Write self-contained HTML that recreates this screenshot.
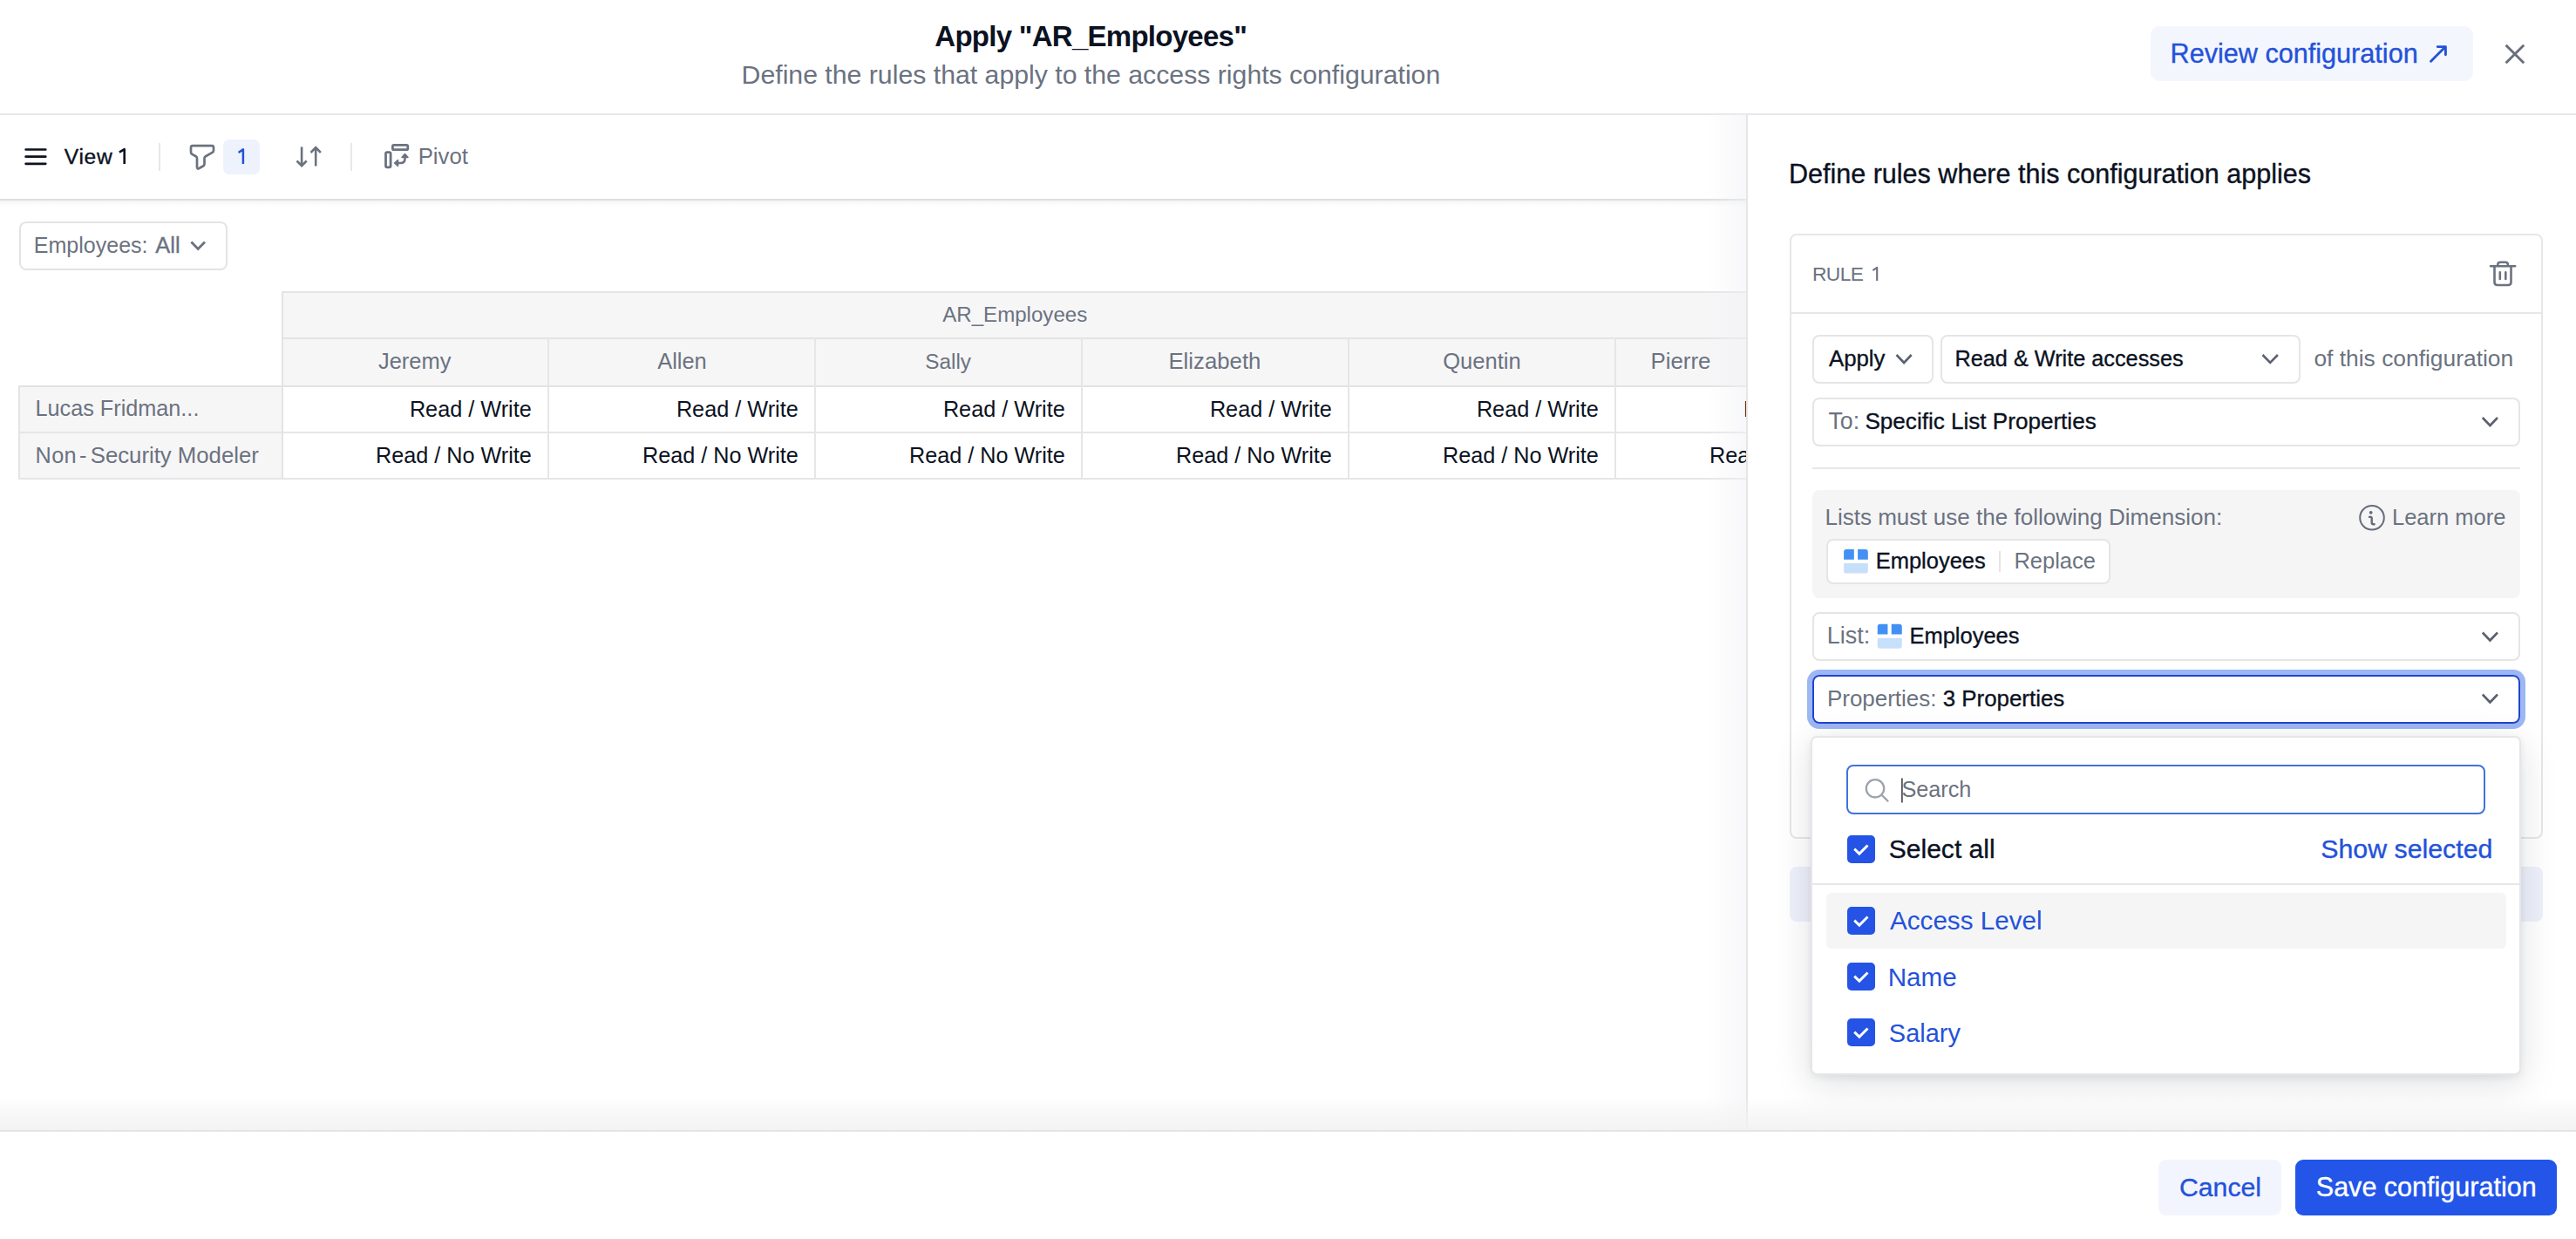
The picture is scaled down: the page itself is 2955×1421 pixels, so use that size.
<!DOCTYPE html>
<html><head><meta charset="utf-8">
<style>
html,body{margin:0;padding:0;width:2955px;height:1421px;overflow:hidden;background:#FFFFFF;}
body{position:relative;font-family:"Liberation Sans",sans-serif;}
.a{position:absolute;box-sizing:border-box;}
.t{position:absolute;line-height:1;white-space:pre;font-family:"Liberation Sans",sans-serif;-webkit-font-smoothing:antialiased;}
.lp{position:absolute;left:0;top:0;width:2004px;height:1297px;overflow:hidden;}
svg{position:absolute;overflow:visible;}
</style></head><body>
<!-- header -->
<div class="a" style="left:0;top:130px;width:2955px;height:2px;background:#E8E8EB"></div>
<div class="a" style="left:2467px;top:30px;width:370px;height:63px;border-radius:10px;background:#F4F6FE"></div>
<svg style="left:0;top:0" width="1" height="1">
  <path d="M2788.6 70.2 L2804.6 54.2 M2796.2 53.6 H2805.4 V62.8" fill="none" stroke="#2352DA" stroke-width="2.9" stroke-linecap="round" stroke-linejoin="round"/>
  <path d="M2874.6 51.8 L2895.2 72.2 M2895.2 51.8 L2874.6 72.2" fill="none" stroke="#676D7B" stroke-width="2.9"/>
</svg>

<!-- left panel -->
<div class="lp">
  <!-- toolbar -->
  <div class="a" style="left:0;top:228px;width:2004px;height:2px;background:#DDDEE1"></div>
  <div class="a" style="left:0;top:230px;width:2004px;height:7px;background:linear-gradient(#F5F5F7,rgba(255,255,255,0))"></div>
  <svg style="left:0;top:0" width="1" height="1">
    <path d="M29.6 171.5 H52.3 M29.6 179.7 H52.3 M29.6 187.8 H52.3" stroke="#0B1222" stroke-width="2.7" stroke-linecap="round"/>
    <path d="M221 167.2 H243 Q245 167.2 245 169.2 V172.5 Q245 174 243.6 174.8 L235.5 179.5 Q234.5 180.2 234.5 181.5 V188 Q234.5 189.5 233.3 190.3 L228.5 193 Q226 194.2 226 191.5 V181.5 Q226 180.2 225 179.5 L220.4 176.8 Q219 176 219 174.5 V169.2 Q219 167.2 221 167.2 Z" fill="none" stroke="#6B7280" stroke-width="2.7" stroke-linejoin="round"/>
    <path d="M346.1 168.5 V190 M340.5 184.5 L346.1 190.2 L351.7 184.5 M362.2 169 V190.5 M356.5 175 L362.2 169.2 L367.9 175" fill="none" stroke="#6B7280" stroke-width="2.6"/>
    <rect x="442.5" y="174.6" width="5.6" height="17.2" rx="1.5" fill="none" stroke="#6B7280" stroke-width="2.8"/>
    <rect x="450.4" y="166.3" width="17.4" height="5.4" rx="1.5" fill="none" stroke="#6B7280" stroke-width="2.8"/>
    <path d="M464.5 180 V182 Q464.5 187 459.5 187 H455" fill="none" stroke="#6B7280" stroke-width="2.6"/>
    <path d="M461 180.5 L464.5 176.5 L468 180.5 Z M456.5 183.5 L452.5 187 L456.5 190.5 Z" fill="#6B7280" stroke="#6B7280" stroke-width="1.5" stroke-linejoin="round"/>
  </svg>
  <svg style="left:0;top:0" width="1" height="1"><path d="M136.9 174.6 L142.7 171.1 V188.1" fill="none" stroke="#0B1222" stroke-width="2.6" stroke-linejoin="round"/></svg>
  <div class="a" style="left:182.3px;top:164px;width:1.5px;height:32px;background:#E5E7EB"></div>
  <div class="a" style="left:402.2px;top:164px;width:1.5px;height:32px;background:#E5E7EB"></div>
  <div class="a" style="left:256px;top:160px;width:42px;height:40px;border-radius:7px;background:#EEF2FD"></div>
  <svg style="left:0;top:0" width="1" height="1"><path d="M273.6 175 L278.9 171.4 V188" fill="none" stroke="#2352DA" stroke-width="2.5" stroke-linejoin="round"/></svg>

  <!-- employees all -->
  <div class="a" style="left:22px;top:254px;width:239px;height:56px;border:2px solid #E3E4E7;border-radius:8px"></div>
  <svg style="left:0;top:0" width="1" height="1">
    <path d="M219.4 277.6 L227.2 285.6 L235 277.6" fill="none" stroke="#6B7280" stroke-width="2.8"/>
  </svg>

  <!-- table -->
  <div class="a" style="left:323px;top:334px;width:1700px;height:108px;background:#F6F6F7"></div>
  <div class="a" style="left:21px;top:442px;width:302px;height:108px;background:#F6F6F7"></div>
  <div class="a" style="left:323px;top:334px;width:1700px;height:2px;background:#E4E4E6"></div>
  <div class="a" style="left:323px;top:387px;width:1700px;height:2px;background:#E4E4E6"></div>
  <div class="a" style="left:21px;top:442px;width:2000px;height:2px;background:#E2E2E5"></div>
  <div class="a" style="left:21px;top:495px;width:2000px;height:2px;background:#E6E6E8"></div>
  <div class="a" style="left:21px;top:548px;width:2000px;height:2px;background:#E6E6E8"></div>
  <div class="a" style="left:21px;top:442px;width:2px;height:108px;background:#E4E4E6"></div>
  <div class="a" style="left:323px;top:334px;width:2px;height:216px;background:#E4E4E6"></div>
  <div class="a" style="left:628px;top:387px;width:2px;height:163px;background:#E6E6E8"></div><div class="a" style="left:934px;top:387px;width:2px;height:163px;background:#E6E6E8"></div><div class="a" style="left:1240px;top:387px;width:2px;height:163px;background:#E6E6E8"></div><div class="a" style="left:1546px;top:387px;width:2px;height:163px;background:#E6E6E8"></div><div class="a" style="left:1852px;top:387px;width:2px;height:163px;background:#E6E6E8"></div>
  <div class="a" style="left:1958px;top:131px;width:46px;height:1166px;background:linear-gradient(90deg,rgba(240,241,244,0),rgba(240,241,244,0.55))"></div>
  <span class="t" style="left:73.80px;top:168px;font-size:24.6px;color:#0B1222;letter-spacing:0.68px;-webkit-text-stroke:0.35px #0B1222">View</span>
<span class="t" style="left:479.64px;top:167px;font-size:25.78px;color:#6B7280">Pivot</span>
<span class="t" style="left:38.70px;top:269px;font-size:25.06px;color:#6B7280">Employees:</span>
<span class="t" style="left:178.30px;top:269px;font-size:25.45px;color:#6B7280;-webkit-text-stroke:0.35px #6B7280">All</span>
<span class="t" style="left:1081.25px;top:349px;font-size:24.08px;color:#6B7280">AR_Employees</span>
<span class="t" style="left:433.95px;top:402px;font-size:25.46px;color:#6B7280">Jeremy</span>
<span class="t" style="left:754.30px;top:402px;font-size:25.38px;color:#6B7280">Allen</span>
<span class="t" style="left:1061.28px;top:403px;font-size:24.32px;color:#6B7280">Sally</span>
<span class="t" style="left:1340.44px;top:402px;font-size:25.77px;color:#6B7280">Elizabeth</span>
<span class="t" style="left:1655.18px;top:402px;font-size:25.54px;color:#6B7280">Quentin</span>
<span class="t" style="left:1893.53px;top:402px;font-size:25.83px;color:#6B7280">Pierre</span>
<span class="t" style="left:469.88px;top:457px;font-size:25.26px;color:#0B1222">Read / Write</span>
<span class="t" style="left:431.08px;top:510px;font-size:25.19px;color:#0B1222">Read / No Write</span>
<span class="t" style="left:775.88px;top:457px;font-size:25.26px;color:#0B1222">Read / Write</span>
<span class="t" style="left:737.08px;top:510px;font-size:25.19px;color:#0B1222">Read / No Write</span>
<span class="t" style="left:1081.88px;top:457px;font-size:25.26px;color:#0B1222">Read / Write</span>
<span class="t" style="left:1043.08px;top:510px;font-size:25.19px;color:#0B1222">Read / No Write</span>
<span class="t" style="left:1387.88px;top:457px;font-size:25.26px;color:#0B1222">Read / Write</span>
<span class="t" style="left:1349.08px;top:510px;font-size:25.19px;color:#0B1222">Read / No Write</span>
<span class="t" style="left:1693.88px;top:457px;font-size:25.26px;color:#0B1222">Read / Write</span>
<span class="t" style="left:1655.08px;top:510px;font-size:25.19px;color:#0B1222">Read / No Write</span>
<span class="t" style="left:1999.88px;top:457px;font-size:25.26px;color:#0B1222">Read / Write</span>
<span class="t" style="left:1961.08px;top:510px;font-size:25.19px;color:#0B1222">Read / No Write</span>
<span class="t" style="left:40.48px;top:456px;font-size:25.24px;color:#6B7280">Lucas Fridman...</span>
<span class="t" style="left:40.48px;top:510px;font-size:25.3px;color:#6B7280;letter-spacing:0.39px">Non</span>
<span class="t" style="left:90.99px;top:510px;font-size:25.3px;color:#6B7280">-</span>
<span class="t" style="left:103.72px;top:510px;font-size:25.74px;color:#6B7280">Security Modeler</span>
</div>
<div class="a" style="left:2003px;top:130px;width:2px;height:1167px;background:#E6E6E9"></div>

<!-- right panel -->
<div class="a" style="left:2053px;top:268px;width:864px;height:694px;border:2px solid #E7E7E9;border-radius:8px"></div>
<div class="a" style="left:2053px;top:358px;width:864px;height:2px;background:#E7E7E9"></div>
<svg style="left:0;top:0" width="1" height="1"><path d="M2148.4 310.2 L2153.2 306.9 V321.9" fill="none" stroke="#6B7280" stroke-width="2.1" stroke-linejoin="round"/></svg>
<svg style="left:0;top:0" width="1" height="1">
  <path d="M2857 305.3 H2885.2 M2865.3 305 V303.5 Q2865.3 300.7 2868.1 300.7 H2874.1 Q2876.9 300.7 2876.9 303.5 V305 M2861.5 305.5 V323.5 Q2861.5 327 2865 327 H2877 Q2880.5 327 2880.5 323.5 V305.5 M2867.8 312.2 V320 M2874.3 312.2 V320" fill="none" stroke="#6B7280" stroke-width="2.6" stroke-linecap="round"/>
</svg>
<div class="a" style="left:2079px;top:384px;width:139px;height:56px;border:2px solid #E5E5E8;border-radius:8px"></div>
<div class="a" style="left:2226px;top:384px;width:413px;height:56px;border:2px solid #E5E5E8;border-radius:8px"></div>
<div class="a" style="left:2079px;top:456px;width:812px;height:56px;border:2px solid #E5E5E8;border-radius:8px"></div>
<div class="a" style="left:2079px;top:536px;width:812px;height:2px;background:#E7E7E9"></div>
<div class="a" style="left:2079px;top:562px;width:812px;height:124px;border-radius:8px;background:#F5F5F6"></div>
<div class="a" style="left:2095px;top:618px;width:326px;height:52px;border:2px solid #E5E5E8;border-radius:8px;background:#FFFFFF"></div>
<div class="a" style="left:2293px;top:632px;width:2px;height:24px;background:#E5E5E8"></div>
<div class="a" style="left:2079px;top:702px;width:812px;height:56px;border:2px solid #E5E5E8;border-radius:8px"></div>
<div class="a" style="left:2079px;top:774px;width:812px;height:56px;border:2px solid #1F45CC;border-radius:8px;box-shadow:0 0 0 6px #9CB7F4"></div>
<svg style="left:0;top:0" width="1" height="1">
  <path d="M2175.5 407 L2184.1 416 L2192.7 407 M2595.5 407 L2604.2 416 L2612.9 407 M2847.8 479 L2856.4 488 L2865 479 M2847.8 725.5 L2856.4 734.5 L2865 725.5 M2847.8 796.5 L2856.4 805.5 L2865 796.5" fill="none" stroke="#5B6170" stroke-width="2.6"/>
  <circle cx="2721" cy="593.7" r="13.8" fill="none" stroke="#656B79" stroke-width="2.0"/>
  <path d="M2718 592.9 H2719.4 Q2720.7 592.9 2720.7 594.2 V599.2 Q2720.7 601.3 2722.8 601.3 H2723.6" fill="none" stroke="#656B79" stroke-width="2.4" stroke-linecap="round"/>
  <circle cx="2719.7" cy="587.8" r="1.9" fill="#656B79"/>
  <!-- dimension icons -->
  <path d="M2115.1 641.8 V633 Q2115.1 630.1 2118 630.1 H2126.8 V641.8 Z M2131.1 630.1 H2139.9 Q2142.8 630.1 2142.8 633 V641.8 H2131.1 Z" fill="#4390F5"/>
  <path d="M2115.1 646.1 H2142.8 V654.7 Q2142.8 657.6 2139.9 657.6 H2118 Q2115.1 657.6 2115.1 654.7 Z" fill="#C7E0FA"/>
  <path d="M2153.75 727.5 V718.7 Q2153.75 715.75 2156.7 715.75 H2165.45 V727.5 Z M2169.75 715.75 H2178.8 Q2181.75 715.75 2181.75 718.7 V727.5 H2169.75 Z" fill="#4390F5"/>
  <path d="M2153.75 731.75 H2181.75 V740.8 Q2181.75 743.75 2178.8 743.75 H2156.7 Q2153.75 743.75 2153.75 740.8 Z" fill="#C7E0FA"/>
</svg>

<!-- add rule button (behind popup) -->
<div class="a" style="left:2053px;top:994px;width:864px;height:63px;border-radius:8px;background:#EEF1FB"></div>

<!-- popup -->
<div class="a" style="left:2077px;top:844px;width:815px;height:389px;border-radius:7px;background:#FFFFFF;border:2px solid #E6E6E9;box-shadow:0 3px 8px rgba(17,24,39,0.07),0 10px 44px rgba(17,24,39,0.13)"></div>
<div class="a" style="left:2118px;top:877px;width:733px;height:57px;border:2px solid #3F73DB;border-radius:8px"></div>
<svg style="left:0;top:0" width="1" height="1">
  <circle cx="2151" cy="904.3" r="10.2" fill="none" stroke="#9CA3AF" stroke-width="2.3"/>
  <path d="M2158.5 911.8 L2165.5 918.6" stroke="#9CA3AF" stroke-width="2.3" stroke-linecap="round"/>
  <path d="M2181.9 892.5 V920.5" stroke="#374151" stroke-width="1.6"/>
</svg>
<div class="a" style="left:2079px;top:1013px;width:811px;height:2px;background:#E7E7E9"></div>
<div class="a" style="left:2095px;top:1024px;width:780px;height:64px;border-radius:6px;background:#F5F5F6"></div>
<div class="a" style="left:2119px;top:958px;width:32px;height:32px;border-radius:5px;background:#2453E6"></div><svg style="left:0;top:0" width="1" height="1"><path d="M2127.2 973.6 L2132.9 979.1 L2142.5 969.4" fill="none" stroke="#FFFFFF" stroke-width="2.9" stroke-linecap="butt" stroke-linejoin="miter"/></svg><div class="a" style="left:2119px;top:1040px;width:32px;height:32px;border-radius:5px;background:#2453E6"></div><svg style="left:0;top:0" width="1" height="1"><path d="M2127.2 1055.6 L2132.9 1061.1 L2142.5 1051.4" fill="none" stroke="#FFFFFF" stroke-width="2.9" stroke-linecap="butt" stroke-linejoin="miter"/></svg><div class="a" style="left:2119px;top:1104px;width:32px;height:32px;border-radius:5px;background:#2453E6"></div><svg style="left:0;top:0" width="1" height="1"><path d="M2127.2 1119.6 L2132.9 1125.1 L2142.5 1115.4" fill="none" stroke="#FFFFFF" stroke-width="2.9" stroke-linecap="butt" stroke-linejoin="miter"/></svg><div class="a" style="left:2119px;top:1168px;width:32px;height:32px;border-radius:5px;background:#2453E6"></div><svg style="left:0;top:0" width="1" height="1"><path d="M2127.2 1183.6 L2132.9 1189.1 L2142.5 1179.4" fill="none" stroke="#FFFFFF" stroke-width="2.9" stroke-linecap="butt" stroke-linejoin="miter"/></svg>
<span class="t" style="left:1072.34px;top:25px;font-size:33px;color:#0B1222;font-weight:700;letter-spacing:-0.73px">Apply &quot;AR_Employees&quot;</span>
<span class="t" style="left:850.58px;top:71px;font-size:30.24px;color:#6B7280">Define the rules that apply to the access rights configuration</span>
<span class="t" style="left:2489.55px;top:46px;font-size:30.61px;color:#2352DA;-webkit-text-stroke:0.35px #2352DA">Review configuration</span>
<span class="t" style="left:2051.96px;top:184px;font-size:30.54px;color:#0B1222;-webkit-text-stroke:0.35px #0B1222">Define rules where this configuration applies</span>
<span class="t" style="left:2079.08px;top:303px;font-size:22.8px;color:#6B7280;letter-spacing:-0.68px">RULE</span>
<span class="t" style="left:2098.00px;top:399px;font-size:25.78px;color:#0B1222;-webkit-text-stroke:0.35px #0B1222">Apply</span>
<span class="t" style="left:2242.48px;top:399px;font-size:25.28px;color:#0B1222;-webkit-text-stroke:0.35px #0B1222">Read &amp; Write accesses</span>
<span class="t" style="left:2654.44px;top:398px;font-size:26.38px;color:#6B7280">of this configuration</span>
<span class="t" style="left:2097.47px;top:470px;font-size:26.71px;color:#6B7280">To:</span>
<span class="t" style="left:2139.46px;top:470px;font-size:26.09px;color:#0B1222;-webkit-text-stroke:0.35px #0B1222">Specific List Properties</span>
<span class="t" style="left:2093.42px;top:580px;font-size:26.04px;color:#6B7280">Lists must use the following Dimension:</span>
<span class="t" style="left:2743.96px;top:581px;font-size:25.51px;color:#6B7280">Learn more</span>
<span class="t" style="left:2151.71px;top:631px;font-size:25.48px;color:#0B1222;-webkit-text-stroke:0.35px #0B1222">Employees</span>
<span class="t" style="left:2310.46px;top:631px;font-size:25.47px;color:#6B7280">Replace</span>
<span class="t" style="left:2095.84px;top:716px;font-size:27.01px;color:#6B7280">List:</span>
<span class="t" style="left:2190.46px;top:717px;font-size:25.48px;color:#0B1222;-webkit-text-stroke:0.35px #0B1222">Employees</span>
<span class="t" style="left:2095.92px;top:788px;font-size:25.98px;color:#6B7280">Properties:</span>
<span class="t" style="left:2228.72px;top:789px;font-size:25.88px;color:#0B1222;-webkit-text-stroke:0.35px #0B1222">3 Properties</span>
<span class="t" style="left:2181.49px;top:893px;font-size:25.23px;color:#6B7280">Search</span>
<span class="t" style="left:2166.80px;top:959px;font-size:30.02px;color:#0B1222;-webkit-text-stroke:0.35px #0B1222">Select all</span>
<span class="t" style="left:2662.29px;top:959px;font-size:30.31px;color:#2352DA;-webkit-text-stroke:0.35px #2352DA">Show selected</span>
<span class="t" style="left:2168.00px;top:1041px;font-size:29.63px;color:#2352DA">Access Level</span>
<span class="t" style="left:2165.63px;top:1106px;font-size:29.67px;color:#2352DA">Name</span>
<span class="t" style="left:2166.84px;top:1171px;font-size:28.95px;color:#2352DA">Salary</span>

<!-- footer -->
<div class="a" style="left:0;top:1258px;width:2955px;height:38px;background:linear-gradient(rgba(243,243,244,0) 0%,rgba(243,243,244,0.45) 40%,rgba(242,242,243,0.95) 100%)"></div>
<div class="a" style="left:0;top:1296px;width:2955px;height:2px;background:#E5E5E8"></div>
<div class="a" style="left:2476px;top:1330px;width:141px;height:64px;border-radius:9px;background:#F3F5FE"></div>
<div class="a" style="left:2633px;top:1330px;width:300px;height:64px;border-radius:9px;background:#2255E8"></div>
<span class="t" style="left:2499.99px;top:1347px;font-size:30.23px;color:#2352DA;-webkit-text-stroke:0.35px #2352DA">Cancel</span>
<span class="t" style="left:2656.78px;top:1346px;font-size:30.54px;color:#FFFFFF;-webkit-text-stroke:0.35px #FFFFFF">Save configuration</span>
</body></html>
